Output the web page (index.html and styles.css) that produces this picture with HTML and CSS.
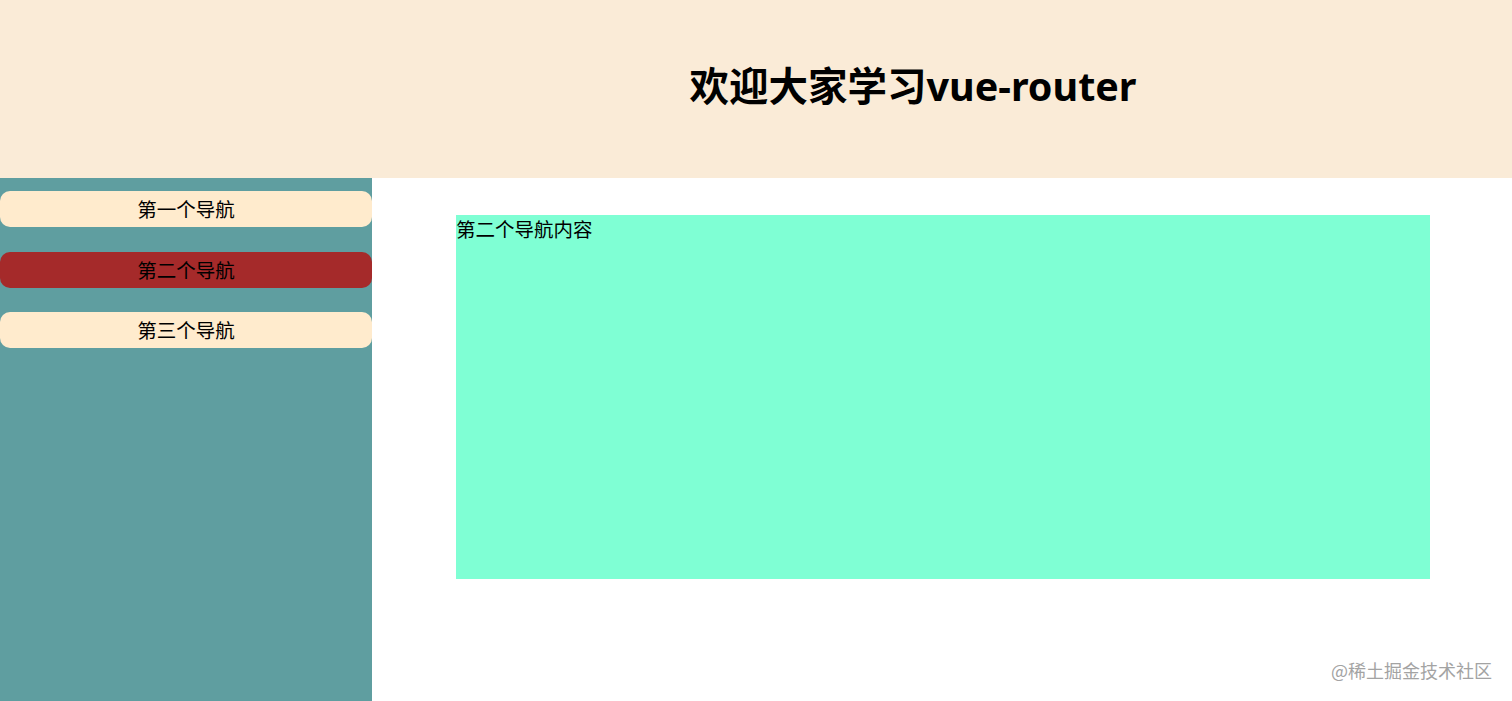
FILE: index.html
```html
<!DOCTYPE html>
<html lang="zh">
<head>
<meta charset="utf-8">
<title>vue-router</title>
<link rel="stylesheet" href="styles.css">
</head>
<body>
<div class="app">
  <header class="header">
    <h1 class="title">欢迎大家学习vue-router</h1>
  </header>
  <div class="body">
    <aside class="sidebar">
      <a class="nav">第一个导航</a>
      <a class="nav active">第二个导航</a>
      <a class="nav">第三个导航</a>
    </aside>
    <main class="main">
      <div class="content">第二个导航内容</div>
    </main>
  </div>
  <div class="watermark">@稀土掘金技术社区</div>
</div>
</body>
</html>
```

FILE: styles.css
```css
* { box-sizing: border-box; }
html, body { margin: 0; padding: 0; }
body {
  font-family: "Noto Sans", "Noto Sans CJK SC", sans-serif;
  font-size: 19.5px;
  color: #000;
  background: #fff;
  width: 1512px;
  height: 701px;
  overflow: hidden;
}
.app {
  position: relative;
  height: 701px;
  display: flex;
  flex-direction: column;
}
.header {
  height: 178px;
  flex: none;
  background: #faebd7;
  display: flex;
  align-items: center;
  justify-content: center;
  padding-left: 314px;
}
.title {
  margin: 0;
  font-size: 39.5px;
  font-weight: 700;
  line-height: 1;
  position: relative;
  top: -2px;
}
.body {
  flex: 1;
  display: flex;
}
.sidebar {
  width: 372px;
  flex: none;
  background: #5f9ea0;
  padding-top: 13px;
  display: flex;
  flex-direction: column;
  gap: 24.5px;
}
.nav {
  display: flex;
  align-items: center;
  justify-content: center;
  height: 36px;
  border-radius: 10px;
  background: #ffebcd;
  color: #000;
  font-family: "Noto Sans CJK SC", sans-serif;
  font-size: 19.5px;
  line-height: 1;
  cursor: pointer;
}
.nav.active {
  background: #a52a2a;
}
.main {
  flex: 1;
  padding: 37px 82px 0 84px;
}
.content {
  width: 974px;
  height: 364px;
  background: #7fffd4;
  font-family: "Noto Sans CJK SC", sans-serif;
  font-size: 19.5px;
  line-height: 28px;
}
.watermark {
  position: absolute;
  right: 20px;
  bottom: 22px;
  font-family: "Noto Sans CJK SC", sans-serif;
  font-size: 18px;
  line-height: 1;
  color: #a3a3a3;
}
```
